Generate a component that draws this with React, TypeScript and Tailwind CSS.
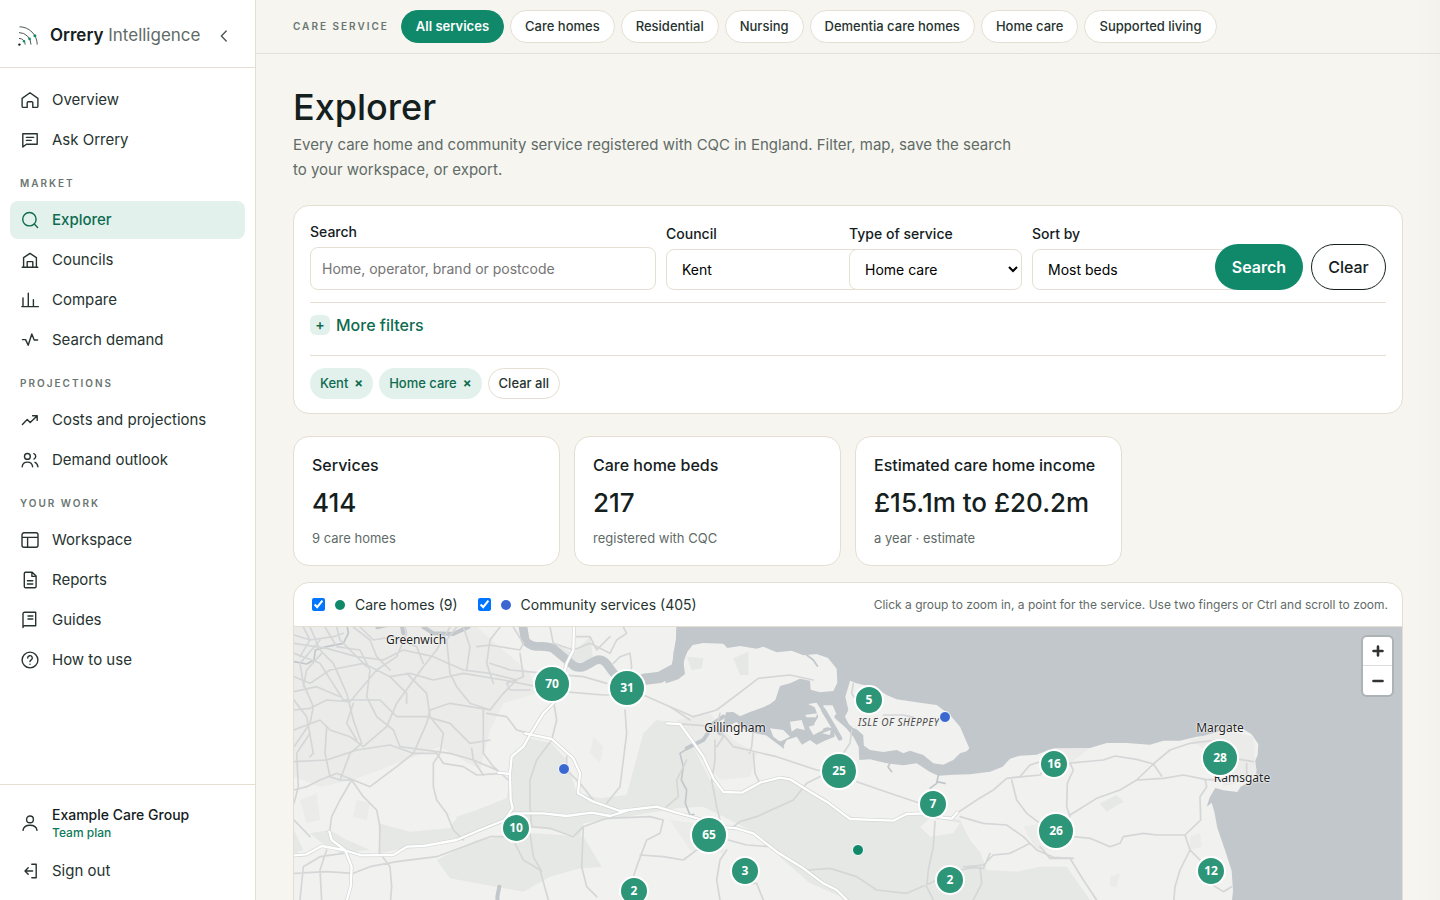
import React from 'react';
import clsx from 'clsx';

type IconProps = { children: React.ReactNode };

const Icon: React.FC<IconProps> = ({ children }) => (
  <svg
    viewBox="0 0 20 20"
    className="h-5 w-5 shrink-0"
    fill="none"
    stroke="currentColor"
    strokeWidth="1.4"
    strokeLinecap="round"
    strokeLinejoin="round"
    aria-hidden="true"
  >
    {children}
  </svg>
);

const icons = {
  home: <path d="M2.1 8.4 10 2.8l7.9 5.6v7.8a1.2 1.2 0 0 1-1.2 1.2h-3.9v-4.6a1 1 0 0 0-1-1H8.2a1 1 0 0 0-1 1v4.6H3.3a1.2 1.2 0 0 1-1.2-1.2Z" />,
  chat: <path d="M2.8 3.8h14.4v10.4H6.4L2.8 17Zm3.6 3.6h7.2M6.4 10.4h4.8" />,
  search: (
    <>
      <circle cx="9.4" cy="9.2" r="6.7" />
      <path d="m14.3 14.1 3.3 3.4" />
    </>
  ),
  council: <path d="M2.2 17.2h15.6M3.6 17V7.6L10 3.4l6.4 4.2V17M7.2 17v-5.4h5.6V17" />,
  compare: <path d="M1.8 16.6h16.6M3 16.4V8M8.3 16.4V3.2M13.4 16.4V9.6" />,
  pulse: <path d="M2.4 9.6h3.2l2.6 5.6L11.8 4l2.4 6h3.4" />,
  trend: <path d="m2.4 14.4 4.8-4.8 3 3L17 6M12.6 5.8h4.6v4.6" />,
  people: (
    <>
      <circle cx="7.4" cy="6.4" r="2.9" />
      <path d="M2.2 16.8c.3-3 2.4-4.7 5.2-4.7s4.9 1.7 5.2 4.7M13.8 3.7a2.9 2.9 0 0 1 .2 5.4M15 12.3c1.7.7 2.7 2.3 2.9 4.5" />
    </>
  ),
  workspace: <path d="M4 2.8h12a2 2 0 0 1 2 2v10.4a2 2 0 0 1-2 2H4a2 2 0 0 1-2-2V4.8a2 2 0 0 1 2-2ZM2 7.4h16M7.6 7.4v9.8" />,
  report: <path d="M5.6 2.2h6.6l3.9 3.9v10.3a1.3 1.3 0 0 1-1.3 1.3H5.6a1.3 1.3 0 0 1-1.3-1.3V3.5a1.3 1.3 0 0 1 1.3-1.3ZM11.9 2.3v4.1h4M7.4 10.8h5.4M7.4 14h5.4" />,
  guide: <path d="M3 17.6V4a1.7 1.7 0 0 1 1.7-1.7h11v13.4H4.6c-1 0-1.6.7-1.6 1.9ZM8 6h4.8M8 9h4.8" />,
  help: (
    <>
      <circle cx="10" cy="10" r="7.9" />
      <path d="M7.7 8a2.3 2.3 0 1 1 3.4 2c-.8.4-1.1.8-1.1 1.6M10 14.2v.1" />
    </>
  ),
  user: (
    <>
      <circle cx="10" cy="6.4" r="3.4" />
      <path d="M3 17.4c.4-3.4 3.2-5.2 7-5.2s6.6 1.8 7 5.2" />
    </>
  ),
  signOut: <path d="M11.8 3.2h4.4v13.6h-4.4M12.6 10H5.2M8.2 6.8 5 10l3.2 3.2" />,
};

const navGroups = [
  {
    title: '',
    items: [
      { label: 'Overview', icon: icons.home },
      { label: 'Ask Orrery', icon: icons.chat },
    ],
  },
  {
    title: 'Market',
    items: [
      { label: 'Explorer', icon: icons.search },
      { label: 'Councils', icon: icons.council },
      { label: 'Compare', icon: icons.compare },
      { label: 'Search demand', icon: icons.pulse },
    ],
  },
  {
    title: 'Projections',
    items: [
      { label: 'Costs and projections', icon: icons.trend },
      { label: 'Demand outlook', icon: icons.people },
    ],
  },
  {
    title: 'Your work',
    items: [
      { label: 'Workspace', icon: icons.workspace },
      { label: 'Reports', icon: icons.report },
      { label: 'Guides', icon: icons.guide },
      { label: 'How to use', icon: icons.help },
    ],
  },
];

const services = [
  'All services',
  'Care homes',
  'Residential',
  'Nursing',
  'Dementia care homes',
  'Home care',
  'Supported living',
];

const stats = [
  { label: 'Services', value: '414', note: '9 care homes' },
  { label: 'Care home beds', value: '217', note: 'registered with CQC' },
  { label: 'Estimated care home income', value: '£15.1m to £20.2m', note: 'a year · estimate' },
];

// x and y are pixels from the top left corner of the map
const clusters = [
  { count: 70, x: 258, y: 57 },
  { count: 31, x: 333, y: 61 },
  { count: 5, x: 575, y: 73 },
  { count: 25, x: 545, y: 144 },
  { count: 16, x: 760, y: 137 },
  { count: 28, x: 926, y: 131 },
  { count: 7, x: 639, y: 177 },
  { count: 10, x: 222, y: 201 },
  { count: 65, x: 415, y: 208 },
  { count: 26, x: 762, y: 204 },
  { count: 3, x: 451, y: 244 },
  { count: 2, x: 340, y: 264 },
  { count: 2, x: 656, y: 253 },
  { count: 12, x: 917, y: 244 },
];

const points = [
  { name: 'Community service', x: 270, y: 142, community: true },
  { name: 'Community service', x: 651, y: 90, community: true },
  { name: 'Care home', x: 564, y: 223, community: false },
];

const places = [
  { name: 'Greenwich', x: 122, y: 13 },
  { name: 'Gillingham', x: 441, y: 101 },
  { name: 'Margate', x: 926, y: 101 },
  { name: 'Ramsgate', x: 948, y: 151 },
];

const Logo: React.FC = () => (
  <svg viewBox="0 0 20 20" className="h-5 w-5 shrink-0" fill="none" stroke="#3c4744" strokeWidth="0.9" aria-hidden="true">
    <path d="M1.5.8a17.8 17.8 0 0 1 17.7 17.8M1 6.6a12 12 0 0 1 12 12M1 12.4a6.2 6.2 0 0 1 6.2 6.2" />
    <g fill="#10896a" stroke="none">
      <circle cx="16.9" cy="9.7" r="1.5" />
      <circle cx="11.6" cy="12.9" r="1.3" />
      <circle cx="6" cy="15.2" r="1.2" />
    </g>
    <circle cx="1.4" cy="18.6" r="1.2" fill="#14201d" stroke="none" />
  </svg>
);

const Sidebar: React.FC = () => (
  <aside className="sticky top-0 flex h-screen w-64 shrink-0 flex-col border-r border-[#e5dfd3] bg-white">
    <div className="flex h-17 items-center justify-between border-b border-[#e5dfd3] pt-1 pr-[19px] pl-[18px]">
      <a href="#" className="flex items-center gap-3 text-[17px]">
        <Logo />
        <span className="text-[#5f6b67]">
          <span className="font-semibold text-[#14201d]">Orrery</span> Intelligence
        </span>
      </a>
      <button aria-label="Collapse menu" className="grid h-6 w-6 place-items-center text-[#4b5753]">
        <svg viewBox="0 0 16 16" className="h-4 w-4" fill="none" stroke="currentColor" strokeWidth="1.4" strokeLinecap="round" strokeLinejoin="round">
          <path d="M10.2 3 5.4 8l4.8 5" />
        </svg>
      </button>
    </div>

    <nav className="flex-1 px-2.5 pt-[13px]">
      {navGroups.map((group) => (
        <div key={group.title}>
          {group.title && (
            <h2 className="flex h-10 items-center px-2.5 pt-1 text-[10px] font-semibold tracking-[2px] text-[#6a7571] uppercase">
              {group.title}
            </h2>
          )}
          {group.items.map((item) => (
            <a
              key={item.label}
              href="#"
              className={clsx(
                'mb-0.5 flex h-[38px] items-center gap-3 rounded-lg px-2.5 text-[15px]',
                item.label === 'Explorer' ? 'bg-[#e2f1ec] font-medium text-[#0f6b50]' : 'text-[#26332f]'
              )}
            >
              <Icon>{item.icon}</Icon>
              <span>{item.label}</span>
            </a>
          ))}
        </div>
      ))}
    </nav>

    <div className="border-t border-[#e5dfd3] px-2.5 pt-2.5 pb-[9px]">
      <a href="#" className="flex h-14 items-center gap-3 px-2.5 text-[#26332f]">
        <Icon>{icons.user}</Icon>
        <span>
          <span className="block text-sm leading-5 font-medium text-[#14201d]">Example Care Group</span>
          <span className="block text-xs leading-4 font-medium text-[#0f7a5b]">Team plan</span>
        </span>
      </a>
      <button className="flex h-10 w-full items-center gap-3 px-2.5 text-[15px] text-[#26332f]">
        <Icon>{icons.signOut}</Icon>
        <span>Sign out</span>
      </button>
    </div>
  </aside>
);

const ServiceBar: React.FC = () => (
  <div className="flex items-center border-b border-[#e3e0d8] px-[37px] py-2.5">
    <span className="mr-3 text-[10px] font-semibold tracking-[2px] text-[#6a7571] uppercase">Care service</span>
    <div className="flex gap-1.5">
      {services.map((service, index) => (
        <button
          key={service}
          className={clsx(
            'h-[33px] rounded-full border px-3.5 text-[13px]',
            index === 0
              ? 'border-[#10896a] bg-[#10896a] font-semibold text-white'
              : 'border-[#e5dfd3] bg-white font-medium text-[#26332f]'
          )}
        >
          {service}
        </button>
      ))}
    </div>
  </div>
);

type SelectFieldProps = { id: string; label: string; value: string; wide?: boolean };

const SelectField: React.FC<SelectFieldProps> = ({ id, label, value, wide }) => (
  <div className="flex min-w-0 flex-col gap-[5px]">
    <label htmlFor={id} className="text-sm leading-5 font-medium">
      {label}
    </label>
    <select
      id={id}
      defaultValue={value}
      className={clsx(
        'h-[41px] rounded-lg border border-[#e5dfd3] bg-white px-[11px] text-sm text-black',
        wide ? 'w-[230px]' : 'w-full'
      )}
    >
      <option>{value}</option>
    </select>
  </div>
);

const Filters: React.FC = () => (
  <section className="mt-[23px] rounded-2xl border border-[#e5dfd3] bg-white px-4 pt-4 pb-3.5">
    <form className="grid grid-cols-[2fr_1fr_1fr_1fr_auto] items-end gap-2.5" onSubmit={(e) => e.preventDefault()}>
      <div className="flex min-w-0 flex-col gap-[5px]">
        <label htmlFor="search" className="text-sm leading-5 font-medium">
          Search
        </label>
        <input
          id="search"
          type="text"
          placeholder="Home, operator, brand or postcode"
          className="h-[43px] w-full rounded-lg border border-[#e5dfd3] bg-white px-[11px] text-sm placeholder:text-[#757575]"
        />
      </div>
      <SelectField id="council" label="Council" value="Kent" wide />
      <SelectField id="type" label="Type of service" value="Home care" />
      <SelectField id="sort" label="Sort by" value="Most beds" wide />
      <div className="relative flex gap-2">
        <button className="h-[46px] w-[88px] rounded-full bg-[#10896a] text-base font-semibold text-white">Search</button>
        <button type="button" className="h-[46px] w-[75px] rounded-full border border-[#14201d] bg-white text-base font-medium">
          Clear
        </button>
      </div>
    </form>

    <div className="mt-3 h-[53px] border-t border-[#e5dfd3] pt-2.5">
      <button className="flex items-center gap-1.5 text-base font-medium text-[#0f6b50]">
        <span className="grid h-5 w-5 place-items-center rounded-md bg-[#e2f1ec] text-sm leading-5 font-semibold">+</span>
        More filters
      </button>
    </div>

    <div className="flex gap-1.5 border-t border-[#e5dfd3] pt-3 text-[13px] font-medium">
      {['Kent', 'Home care'].map((name) => (
        <button key={name} className="flex h-[31px] items-center gap-1.5 rounded-full bg-[#e2f1ec] px-2.5 text-[#0f6b50]">
          {name} <span aria-hidden="true" className="font-bold">×</span>
        </button>
      ))}
      <button className="h-[31px] rounded-full border border-[#e5dfd3] bg-white px-2.5 text-[#26332f]">Clear all</button>
    </div>
  </section>
);

// One drawing unit is a third of a pixel
const MapDrawing: React.FC = () => (
  <svg viewBox="12 21 3324 1260" className="absolute top-0 left-0 h-[420px] w-[1108px]" fill="none" strokeLinecap="round" strokeLinejoin="round" aria-hidden="true">
    {/* mainland */}
    <path
      fill="#f1f1ef"
      d="M0 0H1160L1158 60 1150 100 1148 140 1120 165 1128 190 1165 178 1185 162 1180 125 1192 95 1208 75 1240 69 1300 71 1312 84 1350 78 1400 86 1420 80 1460 97 1505 92 1540 106 1580 102 1614 114 1640 146 1642 188 1630 213 1590 217 1562 209 1560 182 1530 176 1500 190 1470 198 1456 240 1440 252 1420 262 1380 276 1350 289 1330 276 1308 277 1303 300 1310 320 1340 306 1355 325 1390 338 1428 346 1450 362 1478 383 1490 360 1520 350 1536 374 1560 360 1580 374 1604 362 1634 350 1632 325 1610 322 1590 330 1572 312 1585 290 1574 262 1554 252 1580 248 1590 264 1604 284 1600 256 1628 256 1640 284 1662 316 1690 350 1706 380 1708 420 1740 418 1790 430 1840 436 1880 430 1920 456 1945 467 1990 464 2040 463 2100 455 2138 440 2160 416 2190 407 2240 404 2270 392 2335 386 2400 384 2450 369 2510 369 2580 374 2620 362 2670 362 2720 350 2765 345 2805 328 2860 328 2884 342 2905 372 2903 405 2894 425 2900 450 2888 480 2852 500 2842 516 2800 511 2776 504 2760 530 2750 560 2765 548 2773 575 2782 624 2805 690 2825 752 2829 812 2822 880 2790 1281H0Z"
    />
    {/* woods and downs */}
    <g fill="#e6e8e5">
      <path d="M715 355 785 370 830 420 860 520 930 535 1010 525 1060 340 1100 300 1170 310 1215 390 1260 480 1285 510 1360 515 1420 480 1500 480 1580 530 1680 590 1800 600 1900 575 2010 600 2040 660 2072 700 2090 750 2180 755 2250 740 2330 740 2400 840 2480 930 2500 1281H1740L1700 850 1560 790 1480 720 1400 640 1340 610 1240 560 1160 565 1010 590 880 610 870 650 740 620 660 600 560 610 650 540 665 420Z" />
      <path d="M560 570 660 530 650 600 500 655 440 672 360 680 270 700 265 610 360 635 480 625 500 590Z" />
      <path d="M440 720 560 660 650 650 730 640 880 650 935 740 870 745 780 770 700 815 620 800 560 790 480 775Z" />
      <path d="M60 640 120 630 160 655 240 690 150 700 90 665ZM1190 110 1240 115 1235 145 1205 150ZM1330 115 1375 95 1375 165 1350 165ZM2430 550 2480 525 2500 545 2450 575ZM12 630 40 690 12 700ZM790 70 850 100 900 50 910 120 850 130Z" />
    </g>
    {/* built-up areas */}
    <g fill="#ebebe9">
      <path d="M12 21H560L640 90 720 160 740 220 640 250 600 330 570 450 450 380 320 430 190 480 90 500 12 470ZM1160 300 1260 280 1330 360 1400 400 1380 470 1290 480 1220 400ZM2290 385 2400 384 2340 430 2260 440ZM2700 360 2800 330 2890 350 2900 470 2800 500 2790 420ZM2200 620 2300 600 2320 690 2240 690ZM1140 600 1300 620 1300 700 1200 690Z" />
      <path d="M30 540 80 520 90 600 50 610ZM200 540 240 550 230 600 190 590ZM400 510 430 500 440 530 400 560ZM910 350 940 380 930 430 900 400ZM2700 650 2730 640 2735 680 2700 690ZM2460 770 2490 760 2480 800 2460 800Z" />
    </g>
    <g fill="#f1f1ef">
      <path d="M280 450 400 400 450 400 440 480 500 600 360 635 280 600ZM440 390 600 460 650 500 560 570 490 590 430 500ZM1890 620 1925 590 2010 610 1990 640 1920 650Z" />
    </g>
    {/* Medway islands and the Isle of Sheppey */}
    <g fill="#f1f1ef">
      <path d="M1680 182 1700 190 1760 205 1790 225 1820 238 1890 248 1940 255 1980 285 2010 320 2025 355 2038 385 2030 394 2010 400 1990 420 1960 434 1930 430 1900 405 1860 392 1840 400 1820 390 1780 396 1740 390 1720 376 1720 346 1700 328 1680 320 1665 290 1675 270 1666 230 1675 200Z" />
      <path d="M1545 285 1582 280 1578 292 1550 292ZM1500 305 1535 300 1545 330 1520 325 1505 335ZM1556 320 1590 310 1600 330 1570 345ZM1596 340 1622 330 1620 345ZM1440 325 1480 330 1500 350 1470 365 1450 350Z" />
    </g>
    {/* rivers */}
    <g stroke="#c1c7ca">
      <path strokeWidth="26" d="M698 15 706 62C730 92 760 70 790 86L852 138C880 152 898 128 920 120 950 112 956 150 980 168L1040 182 1110 172 1160 148" />
      <path strokeWidth="34" d="M1060 178 1110 172 1160 145 1172 90 1178 15" />
      <path strokeWidth="12" d="M400 21 430 40 490 42 535 21M335 15 340 40M262 22 290 15" />
      <path strokeWidth="5" d="M12 125 50 132 72 120 76 90 110 80 160 70 175 40 172 21" />
      <path strokeWidth="12" d="M1315 290 1290 340 1270 310 1300 290M1260 330 1240 360 1190 385" />
      <path strokeWidth="5" d="M1210 375 1170 400 1180 440 1174 480 1190 510 1186 550 1200 585 1212 583M1800 430 1794 440 1805 455M1945 465 1940 490 1920 505M1940 485 1965 490M1550 105 1570 120 1582 138M1480 383 1470 365" />
      <path strokeWidth="14" d="M1600 270 1630 320 1650 355M1640 290 1680 325 1712 355 1716 395" />
      <path strokeWidth="12" d="M628 800 622 830 624 860" />
    </g>
    {/* minor roads */}
    <g stroke="#d5d6d7" strokeWidth="5">
      <path d="M12 100 90 130 160 240 270 240 320 290 410 290 480 310 540 370 600 360M12 170 60 190 120 150 220 130 300 170 360 160 430 180 520 160 640 180 740 200 820 215 940 225 1060 225 1140 260 1200 300M12 70 110 85 200 110 280 120 340 90 430 110 520 150 600 160 680 180M12 270 60 265 110 240 180 245 260 150 320 110 350 40 345 21M60 21 90 90 130 130 170 220 190 300 215 370 180 400 150 480" />
      <path d="M12 380 60 310 70 260 40 190 30 130 90 60M105 21 140 80 210 90 240 150 230 230 260 290 310 330 330 380 480 400 550 420 620 450M12 425 110 420 200 390 300 375 370 400 440 400 460 430 520 440 560 465 640 460M12 330 90 300 120 330 180 350 220 380 290 320 320 250 400 140 440 90 480 21M12 510 50 500 90 480 140 460 190 480 240 500 320 440 370 400 410 310 420 270 480 250 540 260 600 270 640 220 680 180" />
      <path d="M110 320 105 400 120 470 150 480 185 480 150 540 125 590 118 640M185 480 220 530 260 570 270 620 268 700M430 500 430 430 450 400 460 340 420 290 410 220 350 160M430 500 440 540 470 580 490 630 520 660M12 550 25 500 20 400 60 340M580 270 580 400 610 440 655 480M600 270 540 250 500 200 480 160 470 60 500 21M590 280 650 290 680 330 715 340M545 385 550 420 580 465M690 100 700 170 650 190 660 210 720 210M560 80 600 75 690 90 700 70 670 21" />
      <path d="M790 240 800 300 785 360 740 420 720 480 720 560 725 620 700 640M830 410 830 450 870 490 910 540M1005 270 1010 340 990 500 950 550M720 620 780 625 850 650 880 620 950 595 1080 590 1120 600 1110 640 1070 660 1040 740 1030 770M880 620 875 740 890 800 920 830M670 660 700 720 750 750 775 840M720 640 730 710 755 755M1190 420 1160 480 1165 530 1130 560M1050 705 1120 710 1180 720 1220 690 1270 685" />
      <path d="M12 760 110 755 190 760 240 740 320 725 440 710 520 680 600 650 660 650M30 840 40 740 90 710 160 700M95 840 90 750 110 690M270 700 300 740 305 800 300 860M60 650 12 600M40 21 60 60 30 110M140 21 150 60 230 140M190 21 240 60 260 110 300 150M210 21 250 60 310 50 380 80 400 130M12 45 60 60 130 50 160 40M95 100 50 150 40 200M300 170 350 220 350 250M12 215 80 200 150 230M200 360 170 310 190 250" />
      <path d="M780 21 790 70 850 90 900 70 960 100 980 60 1010 40 1000 21M860 50 900 50 920 90 960 50M970 130 990 110 1020 100 1025 140 1012 200M1060 225 1010 230 1005 200M12 240 50 290 70 400 60 410M600 130 660 150 770 160 880 170 950 190M630 21 600 60 590 130 610 190M520 21 540 80 530 150" />
      <path d="M1140 260 1210 290 1280 270 1340 225 1405 175 1500 165 1570 180M1150 310 1280 320 1330 380 1460 410 1580 450 1610 455M1700 485 1800 520 1890 550M1275 360 1275 420 1265 480 1280 560 1290 600M1390 400 1395 460 1410 490M1390 330 1385 380 1378 400M1610 460 1550 490 1510 540 1400 590 1350 605 1330 620M1280 380 1300 350 1280 320 1290 280M1780 285 1840 285 1870 292M1690 190 1685 220 1710 260M1685 330 1680 370 1660 400" />
      <path d="M2000 580 2060 540 2110 510 2150 475 2190 470 2220 435 2250 425M2150 475 2200 470 2250 465 2270 440M2165 480 2180 540 2210 580 2250 610M2010 590 2080 610 2150 615 2200 650 2240 690 2290 712 2350 715M1935 605 1930 680 1915 750 1910 800 1930 840M2030 740 2080 735 2110 705 2160 700 2220 670M2020 740 2080 745 2100 700M1340 850 1370 920M2070 740 2075 790 2050 840M1555 750 1620 745 1700 770 1760 810 1850 820 1920 790 1990 755 2060 740M1315 660 1370 675 1440 680M1310 690 1290 720 1280 780 1290 840M1360 790 1400 790 1420 840" />
      <path d="M2330 430 2440 420 2475 408 2540 418 2590 432 2640 390 2700 370 2780 360M2590 432 2540 480 2490 510 2420 535 2340 585M2540 480 2620 475 2680 465 2745 478 2750 500 2730 530 2732 600 2685 645 2600 645 2560 640 2500 650 2490 670 2460 680 2400 655 2350 650M2590 432 2615 468M2340 430 2350 450 2332 490 2330 560 2340 590M2685 645 2700 690 2670 750 2655 800 2650 860M2700 690 2740 730 2760 790 2800 815 2825 800M2780 420 2800 410 2890 425M2870 430 2870 470 2850 480M2745 478 2790 480 2830 470M2250 680 2280 715 2340 715 2380 780 2420 840" />
    </g>
    {/* motorways: casing first, then the white line */}
    {['#d3d4d5', '#ffffff'].map((color, index) => (
      <g key={color} stroke={color} strokeWidth={index === 0 ? 11 : 7}>
        <path d="M852 15 850 90 830 130 800 240 760 280 720 345 700 380 665 410 660 460 662 540 668 565 645 600 570 630 500 660 400 678 350 680 310 705 215 706 160 690 95 678 50 703 0 707" />
        <path d="M705 340 785 357 850 415 870 460 864 520 910 545 990 573 1100 560 1160 578 1240 600 1310 622 1340 625 1390 640 1460 695 1540 745 1600 790 1640 810 1690 860 1780 960" />
        <path d="M670 580 760 580 830 588 905 578 960 588 1010 573M625 458 660 462M118 635 125 660 165 690 185 740 182 800 165 860" />
        <path d="M1130 310 1170 312 1205 360 1240 410 1270 475 1300 516 1355 518 1410 488 1470 473 1500 478 1560 515 1610 545 1680 597 1810 602 1850 582 1900 580 1930 590 1985 596 2002 577" />
      </g>
    ))}
  </svg>
);

const ServiceMap: React.FC = () => (
  <div className="relative h-[420px] overflow-hidden bg-[#c1c7ca] font-['Noto_Sans',sans-serif]">
    <MapDrawing />
    {places.map((place) => (
      <span
        key={place.name}
        className="absolute -translate-x-1/2 -translate-y-1/2 text-xs text-[#222222] [text-shadow:0_0_1px_#fff,0_0_2px_#fff,0_0_2px_#fff]"
        style={{ left: place.x, top: place.y }}
      >
        {place.name}
      </span>
    ))}
    <span className="absolute top-[87px] left-[564px] text-[10px] leading-4 tracking-wider text-[#4b4b4b] italic">ISLE OF SHEPPEY</span>
    {clusters.map((cluster) => (
      <button
        key={`${cluster.x}-${cluster.y}`}
        aria-label={`${cluster.count} services`}
        className={clsx(
          'absolute grid -translate-x-1/2 -translate-y-1/2 place-items-center rounded-full border-2 border-white bg-[#2e9678] text-xs font-bold text-white',
          cluster.count >= 20 ? 'h-[38px] w-[38px]' : 'h-[30px] w-[30px]'
        )}
        style={{ left: cluster.x, top: cluster.y }}
      >
        {cluster.count}
      </button>
    ))}
    {points.map((point) => (
      <button
        key={`${point.x}-${point.y}`}
        aria-label={point.name}
        className={clsx(
          'absolute h-3 w-3 -translate-x-1/2 -translate-y-1/2 rounded-full border border-white',
          point.community ? 'bg-[#3b68d0]' : 'bg-[#10896a]'
        )}
        style={{ left: point.x, top: point.y }}
      />
    ))}
    <div className="absolute top-2.5 right-2.5 flex w-[29px] flex-col rounded bg-white text-[#333333] shadow-[0_0_0_2px_rgba(0,0,0,0.1)]">
      <button aria-label="Zoom in" className="grid h-[29px] place-items-center border-b border-[#dddddd]">
        <svg viewBox="0 0 12 12" className="h-3 w-3" stroke="currentColor" strokeWidth="2.6" strokeLinecap="round">
          <path d="M6 1.5v9M1.5 6h9" />
        </svg>
      </button>
      <button aria-label="Zoom out" className="grid h-[29px] place-items-center">
        <svg viewBox="0 0 12 12" className="h-3 w-3" stroke="currentColor" strokeWidth="2.6" strokeLinecap="round">
          <path d="M1.5 6h9" />
        </svg>
      </button>
    </div>
  </div>
);

const MapCard: React.FC = () => (
  <section className="mt-4 overflow-hidden rounded-2xl border border-[#e5dfd3] bg-white">
    <div className="flex h-11 items-center gap-5 border-b border-[#e5dfd3] px-3.5 pl-[18px] text-sm text-[#26332f]">
      <label className="flex items-center">
        <input type="checkbox" defaultChecked className="h-[13px] w-[13px]" />
        <span className="mx-2.5 h-2.5 w-2.5 rounded-full bg-[#10896a]" />
        Care homes (9)
      </label>
      <label className="flex items-center">
        <input type="checkbox" defaultChecked className="h-[13px] w-[13px]" />
        <span className="mx-2.5 h-2.5 w-2.5 rounded-full bg-[#3b68d0]" />
        Community services (405)
      </label>
      <p className="ml-auto text-xs text-[#5f6b67]">
        Click a group to zoom in, a point for the service. Use two fingers or Ctrl and scroll to zoom.
      </p>
    </div>
    <ServiceMap />
  </section>
);

const App: React.FC = () => {
  return (
    <div className="flex h-screen overflow-hidden bg-[#f6f5ef] font-['Inter',sans-serif] text-[#14201d]">
      <Sidebar />
      <div className="min-w-0 flex-1 overflow-hidden bg-linear-to-r from-[#f6f5ef] from-98% to-[#f3f2ec]">
        <ServiceBar />
        <main className="px-[37px] pt-[30px]">
          <h1 className="mb-0.5 text-4xl leading-[46px] font-medium">Explorer</h1>
          <p className="max-w-[735px] text-[15px] leading-[25px] text-[#5f6b67]">
            Every care home and community service registered with CQC in England. Filter, map, save the search to your
            workspace, or export.
          </p>
          <Filters />
          <section className="mt-[22px] grid grid-cols-4 gap-3.5">
            {stats.map((stat) => (
              <div key={stat.label} className="h-[130px] rounded-2xl border border-[#e5dfd3] bg-white px-[18px] pt-4">
                <h2 className="text-base leading-6 font-medium">{stat.label}</h2>
                <p className="mt-2 text-[26px] leading-9 font-medium">{stat.value}</p>
                <p className="mt-[7px] text-[13px] leading-5 text-[#5f6b67]">{stat.note}</p>
              </div>
            ))}
          </section>
          <MapCard />
        </main>
      </div>
    </div>
  );
};

export default App;
